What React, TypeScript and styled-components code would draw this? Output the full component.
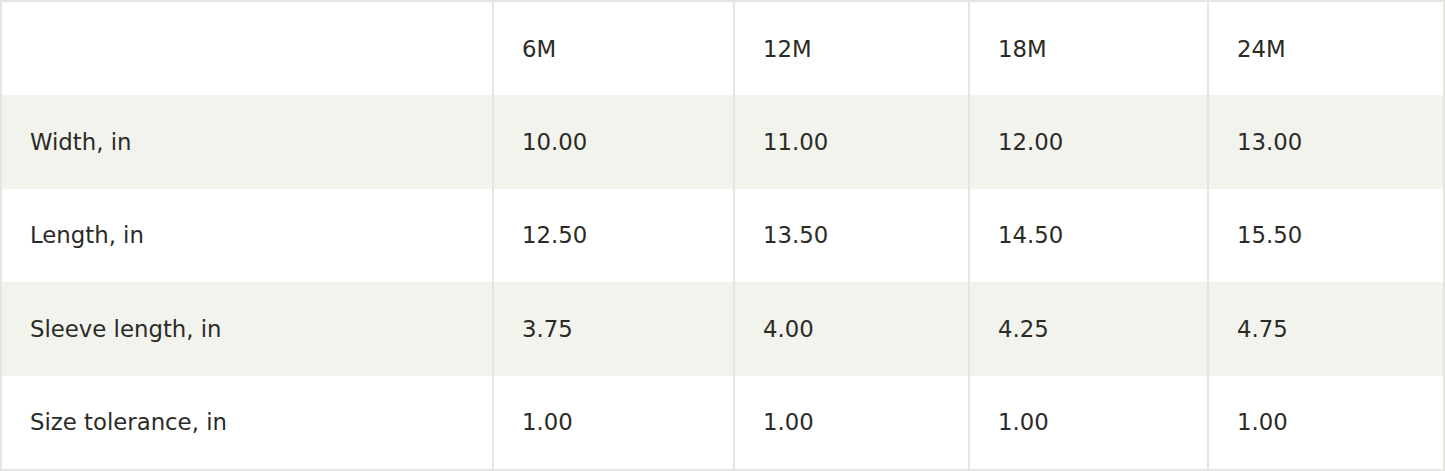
import React from "react";
import styled, { createGlobalStyle } from "styled-components";

const GlobalStyle = createGlobalStyle`
  html, body { margin: 0; padding: 0; background: #ffffff; }
  body { font-family: "DejaVu Sans", Inter, sans-serif; }
`;

const Table = styled.div`
  width: 1445px;
  box-sizing: border-box;
  border: 2px solid #e6e5e1;
  display: flex;
  flex-direction: column;
`;

const Row = styled.div<{ $shaded: boolean }>`
  display: grid;
  grid-template-columns: 490px 241px 235px 239px 234px;
  height: 93.4px;
  background: ${(p) => (p.$shaded ? "#f3f3ee" : "#ffffff")};
`;

const Cell = styled.div<{ $first?: boolean }>`
  display: flex;
  align-items: center;
  padding-left: 28px;
  border-left: ${(p) => (p.$first ? "none" : "2px solid #e6e5e1")};
  font-size: 22.8px;
  color: #2b2b26;
  white-space: nowrap;
`;

const header = ["", "6M", "12M", "18M", "24M"];
const rows: string[][] = [
  ["Width, in", "10.00", "11.00", "12.00", "13.00"],
  ["Length, in", "12.50", "13.50", "14.50", "15.50"],
  ["Sleeve length, in", "3.75", "4.00", "4.25", "4.75"],
  ["Size tolerance, in", "1.00", "1.00", "1.00", "1.00"],
];

export default function App() {
  return (
    <>
      <GlobalStyle />
      <Table>
        <Row $shaded={false}>
          {header.map((h, i) => (
            <Cell key={i} $first={i === 0}>
              {h}
            </Cell>
          ))}
        </Row>
        {rows.map((r, ri) => (
          <Row key={ri} $shaded={ri % 2 === 0}>
            {r.map((c, ci) => (
              <Cell key={ci} $first={ci === 0}>
                {c}
              </Cell>
            ))}
          </Row>
        ))}
      </Table>
    </>
  );
}
